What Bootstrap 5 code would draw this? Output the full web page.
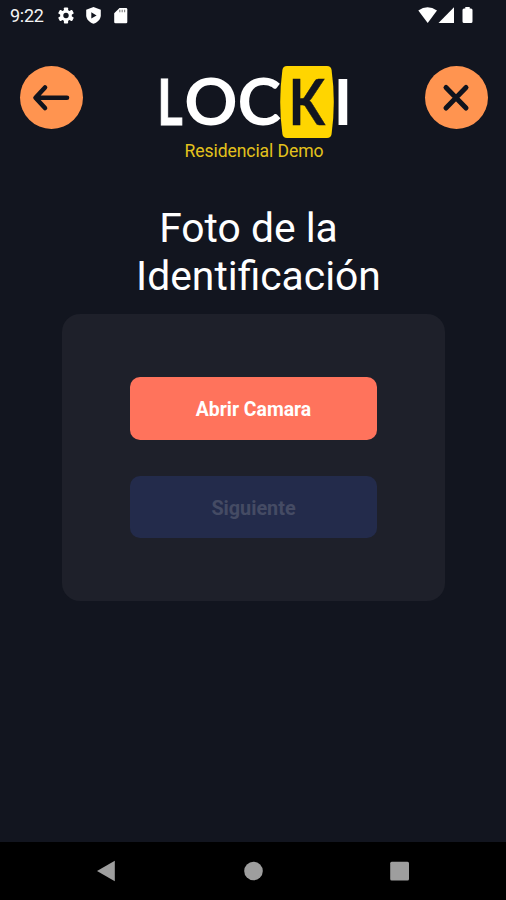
<!DOCTYPE html>
<html lang="es">
<head>
<meta charset="utf-8">
<meta name="viewport" content="width=device-width, initial-scale=1">
<title>Locki</title>
<link href="https://cdn.jsdelivr.net/npm/bootstrap@5.3.0/dist/css/bootstrap.min.css" rel="stylesheet">
<style>
body { background: #12151f; color: #fff; font-family: Roboto, "Liberation Sans", sans-serif; height: 900px; overflow: hidden; }
svg { display: block; }
.status-bar { height: 32px; padding: 0 32px 0 10px; }
.clock { font-size: 18px; line-height: 32px; width: 47px; letter-spacing: -.25px; color: #f4f4f4; }
.app-header { padding: 34px 18.5px 0 19.5px; height: 134px; }
.round-btn { width: 63px; height: 63px; background: #ff9450; color: #10131d; }
.round-btn:hover, .round-btn:active { background: #ff9450; }
.logo { margin: -8px 0 0 1px; }
.site-name { color: #e3c21c; font-size: 17.6px; letter-spacing: -.1px; line-height: 20px; margin-top: -1px; }
.page-title { font-size: 40.8px; line-height: 48px; margin-top: 38px; font-weight: 400; }
.page-title span { display: block; white-space: nowrap; }
.line-one { margin-right: 9px; }
.line-two { margin-left: 11px; }
.photo-card { width: 383px; height: 287px; margin: 14px 0 0 62px; border-radius: 18px; background: #1e202a; padding: 63px 68px; gap: 36px; }
.photo-card .btn { height: 62.5px; border-radius: 10px; font-size: 19.4px; font-weight: 700; border: 0; padding: 3px 0 0; opacity: 1; }
.btn-open, .btn-open:hover { background: #ff735c; color: #fff; }
.photo-card .btn-next { background: #232b4b; color: #454b64; font-size: 19.8px; padding-top: 4px; }
.nav-keys { height: 58px; background: #000; padding: 0 96px 0 96px; color: #9e9e9e; }
</style>
<script src="https://cdn.jsdelivr.net/npm/bootstrap@5.3.0/dist/js/bootstrap.bundle.min.js"></script>
</head>
<body class="d-flex flex-column">
<div class="status-bar d-flex align-items-center">
  <span class="clock">9:22</span>
  <svg width="75" height="32" viewBox="57 0 75 32" fill="#fff" aria-hidden="true">
    <g transform="translate(66 15.5)">
      <circle r="5.8"/>
      <rect x="-2.1" y="-8" width="4.2" height="16" rx=".8"/><rect x="-2.1" y="-8" width="4.2" height="16" rx=".8" transform="rotate(60)"/><rect x="-2.1" y="-8" width="4.2" height="16" rx=".8" transform="rotate(120)"/>
      <circle r="2.7" fill="#12151f"/>
    </g>
    <path d="M93.500 7l7.300 2.800v5.400c0 4-3.300 7.300-7.300 8.600c-4-1.300-7.300-4.600-7.300-8.600V9.800z"/>
    <path d="M91.300 12.200l5.300 3.200l-5.300 3.200z" fill="#12151f"/>
    <path d="M119.500 8H126a1.300 1.300 0 0 1 1.300 1.300V22a1.300 1.300 0 0 1-1.300 1.300H115.500a1.300 1.300 0 0 1-1.300-1.300V13.200z"/>
    <path d="M119.200 9.800h1.200v2.500h-1.200zM121.600 9.800h1.200v2.500h-1.200zM124 9.800h1.200v2.500h-1.200z" fill="#888"/>
  </svg>
  <svg class="ms-auto" width="58" height="32" viewBox="416 0 58 32" fill="#fff" aria-hidden="true">
    <path d="M418.300 10.500Q427.500 3.800 437 10.500L427.700 23z"/>
    <path d="M454 7.200V23H438.500z"/>
    <path d="M465.300 7h4.400v1.500h1.300a1.500 1.500 0 0 1 1.500 1.500V21.500a1.500 1.500 0 0 1-1.500 1.500H464a1.500 1.500 0 0 1-1.500-1.500V10a1.500 1.500 0 0 1 1.500-1.500h1.300z"/>
  </svg>
</div>
<header class="app-header d-flex justify-content-between align-items-start">
  <button class="round-btn btn rounded-circle border-0 p-0" aria-label="Volver">
    <svg width="63" height="63" viewBox="0 0 63 63" fill="none" stroke="currentColor" stroke-width="4.600" stroke-linecap="round" stroke-linejoin="round"><path d="M16 31.700H47M25 21.500L15.500 31.700L25 42"/></svg>
  </button>
  <div class="logo text-center">
    <svg width="208" height="84" viewBox="150 58 208 84" font-family="Lato, sans-serif" font-weight="700" font-size="63.500" fill="#fff" role="img" aria-label="Locki">
      <text transform="translate(157.300 125) scale(.77 1)" stroke="#fff" stroke-width=".9">L</text>
      <text transform="translate(184.200 125.300) scale(1.040 1.020)">O</text>
      <text transform="translate(237.500 125.300) scale(1.040 1.020)">C</text>
      <path d="M287 66H327Q331 66 331.600 70Q336 102 331.600 134Q331 138 327 138H287Q283 138 282.400 134Q278 102 282.400 70Q283 66 287 66z" fill="#ffd500"/>
      <text transform="translate(288.700 125) scale(.83 1)" fill="#12151f" stroke="#12151f" stroke-width=".5">K</text>
      <text y="125" x="333.500">I</text>
    </svg>
    <div class="site-name">Residencial Demo</div>
  </div>
  <button class="round-btn btn rounded-circle border-0 p-0" aria-label="Cerrar">
    <svg width="63" height="63" viewBox="0 0 63 63" fill="none" stroke="currentColor" stroke-width="5" stroke-linecap="round"><path d="M21 21.500L41 42M41 21.500L21 42"/></svg>
  </button>
</header>
<main class="flex-grow-1">
  <h1 class="page-title text-center mb-0"><span class="line-one">Foto de la</span><span class="line-two">Identificación</span></h1>
  <section class="photo-card d-flex flex-column">
    <button class="btn btn-open">Abrir Camara</button>
    <button class="btn btn-next" disabled>Siguiente</button>
  </section>
</main>
<footer class="nav-keys d-flex align-items-center justify-content-between">
  <svg width="20" height="22" viewBox="0 0 20 22" fill="currentColor"><path d="M1 11L18.800 .8V21.200z"/></svg>
  <svg width="20" height="20" viewBox="0 0 20 20" fill="currentColor"><circle cx="10.500" cy="10" r="9.300"/></svg>
  <svg width="20" height="20" viewBox="0 0 20 20" fill="currentColor"><rect x=".2" y=".8" width="18.800" height="18.800" rx="1.500"/></svg>
</footer>
</body>
</html>
